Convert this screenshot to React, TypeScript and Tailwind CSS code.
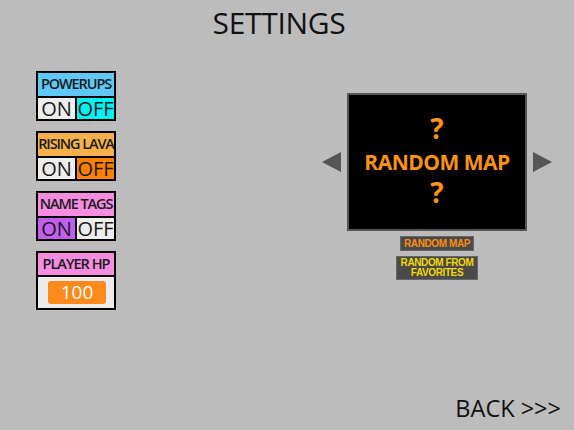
import React from "react";

type ToggleProps = {
  label: string;
  headerBg: string;
  onBg: string;
  offBg: string;
};

function TogglePanel({ label, headerBg, onBg, offBg }: ToggleProps) {
  return (
    <div className="w-[80px] border-2 border-black bg-black flex flex-col gap-[2px]">
      <div
        className={`h-[23px] flex items-center justify-center text-[14.5px] font-semibold leading-none tracking-[-1.1px] text-[#1a1a1a] whitespace-nowrap overflow-hidden ${headerBg}`}
      >
        {label}
      </div>
      <div className="h-[21px] flex gap-[2px]">
        <div className={`flex-1 flex items-center justify-center text-[20px] font-medium leading-none text-[#1a1a1a] ${onBg}`}>
          ON
        </div>
        <div className={`flex-1 flex items-center justify-center text-[20px] font-medium leading-none text-[#1a1a1a] ${offBg}`}>
          OFF
        </div>
      </div>
    </div>
  );
}

function HpPanel() {
  return (
    <div className="w-[80px] border-2 border-black bg-black flex flex-col gap-[2px]">
      <div className="h-[22px] flex items-center justify-center text-[14.5px] font-semibold leading-none tracking-[-1px] text-[#1a1a1a] bg-[#f78ce0]">
        PLAYER HP
      </div>
      <div className="h-[31px] bg-[#ececec] flex items-center justify-center">
        <div className="w-[58px] h-[23px] ml-[2px] rounded-[3px] bg-[#ff8a1c] flex items-center justify-center text-white text-[19px] leading-none">
          100
        </div>
      </div>
    </div>
  );
}

function Arrow({ dir }: { dir: "left" | "right" }) {
  return (
    <svg width="19" height="20" viewBox="0 0 19 20">
      {dir === "left" ? (
        <polygon points="19,0 19,20 0,10" fill="#555555" />
      ) : (
        <polygon points="0,0 0,20 19,10" fill="#555555" />
      )}
    </svg>
  );
}

export default function App() {
  return (
    <div
      className="w-[574px] h-[430px] bg-[#bcbcbc] flex flex-col overflow-hidden"
      style={{ fontFamily: '"Open Sans", "Noto Sans", sans-serif' }}
    >
      <div className="h-[46px] pr-[16px] flex items-center justify-center text-[30px] leading-none text-[#111] tracking-[-0.3px]">
        SETTINGS
      </div>

      <div className="flex">
        <div className="ml-[36px] mt-[25px] flex flex-col gap-[10px]">
          <TogglePanel label="POWERUPS" headerBg="bg-[#5ec8f6]" onBg="bg-[#eeeeee]" offBg="bg-[#00f2f2]" />
          <TogglePanel label="RISING LAVA" headerBg="bg-[#f8b04c]" onBg="bg-[#eeeeee]" offBg="bg-[#ff7f00]" />
          <TogglePanel label="NAME TAGS" headerBg="bg-[#f78ce0]" onBg="bg-[#c35ef2]" offBg="bg-[#eeeeee]" />
          <HpPanel />
        </div>

        <div className="ml-[206px] mt-[47px] flex flex-col items-center">
          <div className="flex items-center gap-[6px]">
            <Arrow dir="left" />
            <div className="w-[180px] h-[138px] bg-black border-2 border-[#555] flex flex-col items-center justify-center text-[#ff9412] font-bold">
              <div className="text-[28px] leading-[30px] mb-[4px] -mt-[4px]">?</div>
              <div className="text-[21px] leading-[30px] tracking-[-0.5px]">RANDOM MAP</div>
              <div className="text-[28px] leading-[30px]">?</div>
            </div>
            <Arrow dir="right" />
          </div>

          <div
            className="mt-[5px] h-[15px] px-[3px] bg-[#4a4a4a] border border-[#666] flex items-center text-[10px] leading-none font-bold text-[#ff8a10] tracking-[-0.4px]"
            style={{ fontFamily: '"Liberation Sans", Arial, sans-serif' }}
          >
            RANDOM MAP
          </div>
          <div
            className="mt-[5px] w-[82px] h-[24px] bg-[#4a4a4a] border border-[#666] flex flex-col items-center justify-center text-[10px] leading-[10px] font-bold text-[#f2d800] tracking-[-0.4px]"
            style={{ fontFamily: '"Liberation Sans", Arial, sans-serif' }}
          >
            <span>RANDOM FROM</span>
            <span>FAVORITES</span>
          </div>
        </div>
      </div>

      <div className="mt-auto mb-[10px] mr-[13px] self-end text-[23.5px] leading-none text-[#111]">
        BACK &gt;&gt;&gt;
      </div>
    </div>
  );
}
